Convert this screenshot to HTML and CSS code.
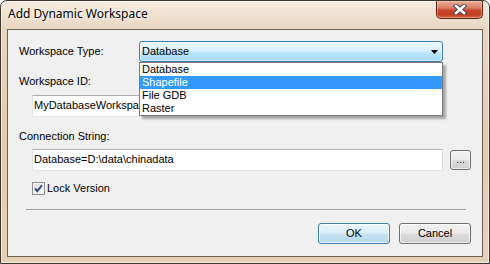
FILE: index.html
```html
<!DOCTYPE html>
<html>
<head>
<meta charset="utf-8">
<title>Add Dynamic Workspace</title>
<link rel="stylesheet" href="styles.css">
</head>
<body>
<div class="window">
  <div class="titlebar">
    <span class="title">Add Dynamic Workspace</span>
    <div class="close">
      <svg width="14" height="11" viewBox="0 0 14 11">
        <path d="M3 2 L11 9 M11 2 L3 9" stroke="#4b4b4b" stroke-width="4.6" stroke-linecap="square" fill="none"/>
        <path d="M3 2 L11 9 M11 2 L3 9" stroke="#ffffff" stroke-width="2.6" stroke-linecap="square" fill="none"/>
      </svg>
    </div>
  </div>
  <div class="client">
    <div class="type-row">
      <span class="label type-label">Workspace Type:</span>
      <div class="combo">
        <span class="combo-value">Database</span>
        <svg class="combo-arrow" width="7" height="4" viewBox="0 0 7 4"><path d="M0 0 H7 L3.5 4 Z" fill="#000"/></svg>
        <ul class="dropdown">
          <li class="item">Database</li>
          <li class="item selected">Shapefile</li>
          <li class="item">File GDB</li>
          <li class="item">Raster</li>
        </ul>
      </div>
    </div>
    <div class="label field-label">Workspace ID:</div>
    <div class="textbox id-box">MyDatabaseWorkspace</div>
    <div class="label field-label conn-label">Connection String:</div>
    <div class="conn-row">
      <div class="textbox conn-box">Database=D:\data\chinadata</div>
      <div class="browse">...</div>
    </div>
    <div class="check-row">
      <span class="checkbox">
        <svg width="11" height="11" viewBox="0 0 11 11"><path d="M2 5.5 L4.3 8.2 L9 2.2" stroke="#2f4d8f" stroke-width="2" fill="none"/></svg>
      </span>
      <span class="label">Lock Version</span>
    </div>
    <div class="separator"></div>
    <div class="buttons">
      <div class="btn btn-default">OK</div>
      <div class="btn">Cancel</div>
    </div>
  </div>
</div>
</body>
</html>
```

FILE: styles.css
```css
* { box-sizing: border-box; }
html, body { margin: 0; padding: 0; }
body {
  width: 490px;
  height: 264px;
  overflow: hidden;
  background: #ffffff;
  font-family: "Liberation Sans", Arial, sans-serif;
  font-size: 11px;
  color: #000;
}
.window {
  width: 490px;
  height: 264px;
  border: 1px solid #3f362d;
  border-radius: 7px 7px 0 0;
  background: linear-gradient(to bottom, #f5ebe0 0px, #efe0cf 14px, #e9d5c0 30px, #e2cab0 140px, #e6d0b8 264px);
  box-shadow: inset 0 0 0 1px rgba(255,255,255,0.55);
  display: flex;
  flex-direction: column;
}
.titlebar {
  height: 28px;
  display: flex;
  justify-content: space-between;
  align-items: flex-start;
}
.title {
  font-family: "Noto Sans", "Open Sans", sans-serif;
  font-size: 12px;
  line-height: 16px;
  padding: 5px 0 0 7px;
  color: #000;
  text-shadow: 0 0 6px rgba(255,255,255,0.95), 0 0 3px rgba(255,255,255,0.9);
}
.close {
  width: 47px;
  height: 18px;
  margin-right: 6px;
  border: 1px solid #5a2519;
  border-top: none;
  border-radius: 0 0 5px 5px;
  background: linear-gradient(to bottom, #e9ad9e 0%, #dc7d67 40%, #c9472d 55%, #c43d22 80%, #d3664a 100%);
  box-shadow: inset 0 0 0 1px rgba(255,210,190,0.45);
  display: flex;
  align-items: center;
  justify-content: center;
}
.client {
  height: 228px;
  margin: 0 6px;
  border: 1px solid #6f6152;
  background: #f0f0f0;
  padding: 11px 11px 0 11px;
  display: flex;
  flex-direction: column;
}
.label { line-height: 13px; white-space: nowrap; }
.type-row {
  display: flex;
  align-items: center;
  height: 21px;
}
.type-label { width: 120px; }
.combo {
  position: relative;
  width: 304px;
  height: 21px;
  border: 1px solid #3c7fb1;
  border-radius: 3px;
  background: linear-gradient(to bottom, #eaf6fd 0%, #d9f0fc 48%, #bee6fd 52%, #a7d9f5 100%);
  box-shadow: inset 0 0 0 1px rgba(255,255,255,0.5);
  display: flex;
  align-items: center;
  justify-content: space-between;
  padding: 0 4px 0 2px;
}
.combo-value { line-height: 13px; }
.combo-arrow { display: block; }
.dropdown {
  position: absolute;
  top: 20px;
  left: -1px;
  width: 304px;
  margin: 0;
  padding: 0;
  list-style: none;
  background: #ffffff;
  border: 1px solid #7a7a7a;
  box-shadow: 3px 3px 2px rgba(0,0,0,0.3);
  z-index: 10;
}
.item {
  height: 13px;
  line-height: 13px;
  padding-left: 2px;
  color: #000;
}
.item.selected {
  background: #3399ff;
  color: #ffffff;
}
.field-label { margin-top: 13px; }
.conn-label { margin-top: 13px; }
.textbox {
  height: 22px;
  background: #ffffff;
  border: 1px solid;
  border-color: #abadb3 #dbdfe6 #e3e9ef #e2e3ea;
  padding: 3px 1px;
  line-height: 13px;
  white-space: nowrap;
  overflow: hidden;
}
.id-box {
  margin-top: 7px;
  margin-left: 13px;
  width: 411px;
}
.conn-row {
  margin-top: 6px;
  margin-left: 13px;
  display: flex;
  align-items: center;
  gap: 7px;
}
.conn-box { width: 411px; }
.browse {
  width: 21px;
  height: 20px;
  border: 1px solid #707070;
  border-radius: 3px;
  background: linear-gradient(to bottom, #f2f2f2 0%, #ebebeb 48%, #dddddd 52%, #cfcfcf 100%);
  box-shadow: inset 0 0 0 1px rgba(255,255,255,0.6);
  text-align: center;
  line-height: 17px;
  color: #1a1a6a;
}
.check-row {
  margin-top: 11px;
  margin-left: 13px;
  display: flex;
  align-items: center;
  height: 13px;
}
.checkbox {
  width: 13px;
  height: 13px;
  margin-right: 2px;
  border: 1px solid #8e8f8f;
  background: linear-gradient(135deg, #dcdcdc 0%, #f4f4f4 60%, #ffffff 100%);
  box-shadow: inset 0 0 0 1px #f4f4f4;
  display: flex;
  align-items: center;
  justify-content: center;
}
.checkbox svg { display: block; }
.separator {
  margin: 14px 5px 0 7px;
  height: 1px;
  background: #a0a0a0;
}
.buttons {
  margin-top: 13px;
  display: flex;
  justify-content: flex-end;
  gap: 9px;
}
.btn {
  width: 72px;
  height: 21px;
  border: 1px solid #707070;
  border-radius: 3px;
  background: linear-gradient(to bottom, #f2f2f2 0%, #ebebeb 48%, #dddddd 52%, #cfcfcf 100%);
  box-shadow: inset 0 0 0 1px rgba(255,255,255,0.7);
  text-align: center;
  line-height: 19px;
}
.btn-default {
  border-color: #3c7fb1;
  background: linear-gradient(to bottom, #eaf6fd 0%, #dbeff9 48%, #c6e3f3 52%, #b5d6ea 100%);
  box-shadow: inset 0 0 0 1px rgba(255,255,255,0.75);
}
```
